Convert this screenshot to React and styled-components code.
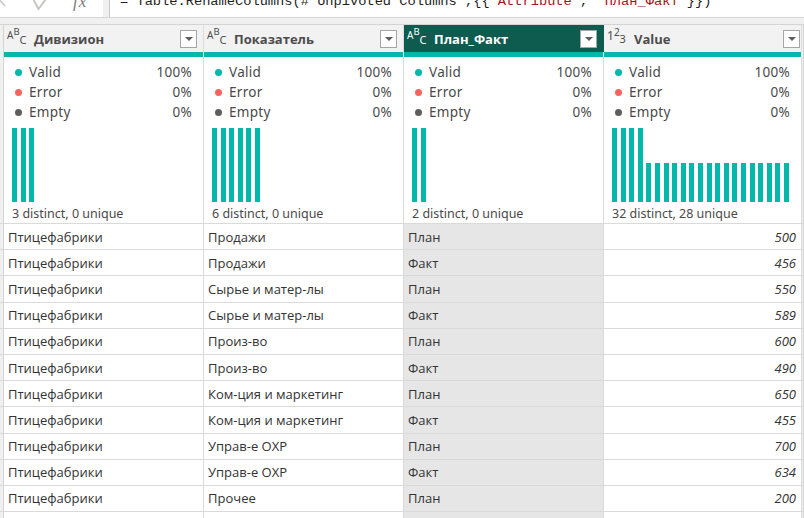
import styled, { createGlobalStyle } from 'styled-components'

const TEAL = '#01b8aa'
const COLS = '4px 200px 200px 200px 198px 2px'

const GlobalStyle = createGlobalStyle`
  html, body {
    margin: 0;
    padding: 0;
    background: #f0f0f0;
  }
  body {
    font-family: 'Open Sans', sans-serif;
    overflow: hidden;
  }
`

const Page = styled.div`
  width: 804px;
  height: 518px;
  overflow: hidden;
  background: #f0f0f0;
`

const FormulaBar = styled.div`
  display: flex;
  gap: 6px;
  height: 17px;
  overflow: hidden;
  border-bottom: 1px solid #d6d6d6;
`

const FormulaButtons = styled.div`
  width: 103px;
  background: #fff;
  display: flex;
  align-items: flex-start;
`

const CloseMark = styled.svg`
  width: 6px;
  height: 8px;
  margin-right: 27px;
`

const CheckMark = styled.svg`
  width: 14px;
  height: 11px;
  margin-right: 26px;
`

const Fx = styled.span`
  font-family: 'Liberation Serif', serif;
  font-style: italic;
  font-size: 17px;
  line-height: 18px;
  margin-top: -7px;
  color: #7a7a7a;
  letter-spacing: 1px;
`

const FormulaInput = styled.div`
  flex: 1;
  background: #fff;
  border-left: 1px solid #c8c8c8;
  padding-left: 10px;
  overflow: hidden;
`

const Code = styled.div`
  font-family: 'Liberation Mono', monospace;
  font-size: 13.7px;
  line-height: 18px;
  margin-top: -7px;
  color: #1e1e1e;
  white-space: pre;
`

const Str = styled.span`
  color: #a31515;
`

const Grid = styled.div`
  margin-top: 6px;
  border-top: 1px solid #d4d4d4;
`

const Row = styled.div`
  display: grid;
  grid-template-columns: ${COLS};
  height: ${p => p.$h}px;
  border-bottom: ${p => (p.$line ? '1px solid #dadada' : 'none')};
`

const Stub = styled.div`
  background: #f0f0f0;
  border-right: 1px solid #d4d4d4;
`

const HeaderCell = styled.div`
  display: flex;
  align-items: center;
  padding-left: 3px;
  background: ${p => (p.$selected ? '#0e5c4f' : '#f2f2f2')};
  color: ${p => (p.$selected ? '#ffffff' : '#4d4d4d')};
  border-right: 1px solid ${p => (p.$selected ? '#0e5c4f' : '#dcdcdc')};
`

const TypeIcon = styled.span`
  display: flex;
  align-items: flex-start;
  align-self: stretch;
  width: 27px;
  font-family: 'Noto Sans', sans-serif;
`

const Glyph = styled.span`
  font-size: ${p => p.$size}px;
  line-height: 1;
  margin-top: ${p => p.$top}px;
`

const HeaderLabel = styled.span`
  font-family: 'Open Sans', sans-serif;
  font-weight: 700;
  font-size: 13px;
`

const DropButton = styled.span`
  margin-left: auto;
  margin-right: ${p => (p.$edge ? 1 : 6)}px;
  width: 17px;
  height: 18px;
  box-sizing: border-box;
  border: 1px solid #a6a6a6;
  background: #fff;
  display: flex;
  align-items: center;
  justify-content: center;

  &::after {
    content: '';
    border-left: 4px solid transparent;
    border-right: 4px solid transparent;
    border-top: 4px solid #605e5c;
  }
`

const QualityStripe = styled.div`
  background: ${TEAL};
  border-right: 1px solid #e8e8e8;
`

const StatsCell = styled.div`
  display: flex;
  flex-direction: column;
  padding: 5px 11px 0 8px;
  background: #fff;
  border-right: 1px solid #dadada;
  font-family: 'Noto Sans', sans-serif;
  color: #4a4a4a;
  overflow: hidden;
`

const StatLine = styled.div`
  display: flex;
  align-items: center;
  height: 20px;
  font-size: 13.5px;
  letter-spacing: 0.3px;
`

const Dot = styled.span`
  width: 7px;
  height: 7px;
  border-radius: 50%;
  background: ${p => p.$color};
  margin: 0 7px 0 3px;
`

const Pct = styled.span`
  margin-left: auto;
`

const Bars = styled.div`
  display: flex;
  align-items: flex-end;
  gap: 3.6px;
  height: 74px;
  margin-top: 6px;
`

const Bar = styled.div`
  width: 5px;
  background: ${TEAL};
`

const Distinct = styled.div`
  height: 19px;
  line-height: 21px;
  margin-top: 1px;
  font-size: 12.5px;
`

const Cell = styled.div`
  display: flex;
  align-items: center;
  justify-content: ${p => (p.$num ? 'flex-end' : 'flex-start')};
  padding: ${p => (p.$num ? '0 5px 0 0' : '0 0 0 4px')};
  background: ${p => (p.$selected ? '#e6e6e6' : '#fff')};
  border-right: 1px solid #dadada;
  font-size: 13px;
  font-style: ${p => (p.$num ? 'italic' : 'normal')};
  color: #333;
  white-space: nowrap;
  overflow: hidden;
`

const columns = [
  { name: 'Дивизион', type: 'text', distinct: '3 distinct, 0 unique', bars: [1, 1, 1] },
  { name: 'Показатель', type: 'text', distinct: '6 distinct, 0 unique', bars: [1, 1, 1, 1, 1, 1] },
  { name: 'План_Факт', type: 'text', distinct: '2 distinct, 0 unique', bars: [1, 1], selected: true },
  {
    name: 'Value',
    type: 'number',
    distinct: '32 distinct, 28 unique',
    bars: [1, 1, 1, 1, ...Array(17).fill(0.53)],
    edge: true,
  },
]

const rows = [
  ['Птицефабрики', 'Продажи', 'План', '500'],
  ['Птицефабрики', 'Продажи', 'Факт', '456'],
  ['Птицефабрики', 'Сырье и матер-лы', 'План', '550'],
  ['Птицефабрики', 'Сырье и матер-лы', 'Факт', '589'],
  ['Птицефабрики', 'Произ-во', 'План', '600'],
  ['Птицефабрики', 'Произ-во', 'Факт', '490'],
  ['Птицефабрики', 'Ком-ция и маркетинг', 'План', '650'],
  ['Птицефабрики', 'Ком-ция и маркетинг', 'Факт', '455'],
  ['Птицефабрики', 'Управ-е ОХР', 'План', '700'],
  ['Птицефабрики', 'Управ-е ОХР', 'Факт', '634'],
  ['Птицефабрики', 'Прочее', 'План', '200'],
  ['', '', '', ''],
]

const TypeBadge = ({ type }) =>
  type === 'number' ? (
    <TypeIcon>
      <Glyph $size={12} $top={5}>1</Glyph>
      <Glyph $size={10} $top={2}>2</Glyph>
      <Glyph $size={11} $top={8}>3</Glyph>
    </TypeIcon>
  ) : (
    <TypeIcon>
      <Glyph $size={10} $top={5}>A</Glyph>
      <Glyph $size={9.5} $top={2}>B</Glyph>
      <Glyph $size={11} $top={9}>C</Glyph>
    </TypeIcon>
  )

const App = () => (
  <Page>
    <GlobalStyle />
    <FormulaBar>
      <FormulaButtons>
        <CloseMark viewBox="0 0 6 8">
          <path d="M-3 -3 L5 6" stroke="#c8c6c4" strokeWidth="1.6" fill="none" />
        </CloseMark>
        <CheckMark viewBox="0 0 14 11">
          <polyline points="0,-1 5.5,9 13,-1" stroke="#c8c6c4" strokeWidth="2" fill="none" />
        </CheckMark>
        <Fx>fx</Fx>
      </FormulaButtons>
      <FormulaInput>
        <Code>
          = Table.RenameColumns(#"Unpivoted Columns",{'{{'}
          <Str>"Attribute"</Str>, <Str>"План_Факт"</Str>{'}})'}
        </Code>
      </FormulaInput>
    </FormulaBar>

    <Grid>
      <Row $h={27}>
        <Stub />
        {columns.map(c => (
          <HeaderCell key={c.name} $selected={c.selected}>
            <TypeBadge type={c.type} />
            <HeaderLabel>{c.name}</HeaderLabel>
            <DropButton $edge={c.edge} />
          </HeaderCell>
        ))}
        <Stub />
      </Row>

      <Row $h={5}>
        <Stub />
        {columns.map(c => (
          <QualityStripe key={c.name} />
        ))}
        <Stub />
      </Row>

      <Row $h={166} $line>
        <Stub />
        {columns.map(c => (
          <StatsCell key={c.name}>
            <StatLine>
              <Dot $color={TEAL} />
              Valid
              <Pct>100%</Pct>
            </StatLine>
            <StatLine>
              <Dot $color="#fd625e" />
              Error
              <Pct>0%</Pct>
            </StatLine>
            <StatLine>
              <Dot $color="#605e5c" />
              Empty
              <Pct>0%</Pct>
            </StatLine>
            <Bars>
              {c.bars.map((h, i) => (
                <Bar key={i} style={{ height: `${h * 100}%` }} />
              ))}
            </Bars>
            <Distinct>{c.distinct}</Distinct>
          </StatsCell>
        ))}
        <Stub />
      </Row>

      {rows.map((r, i) => (
        <Row key={i} $h={25.2} $line>
          <Stub />
          <Cell>{r[0]}</Cell>
          <Cell>{r[1]}</Cell>
          <Cell $selected>{r[2]}</Cell>
          <Cell $num>{r[3]}</Cell>
          <Stub />
        </Row>
      ))}
    </Grid>
  </Page>
)

export default App
